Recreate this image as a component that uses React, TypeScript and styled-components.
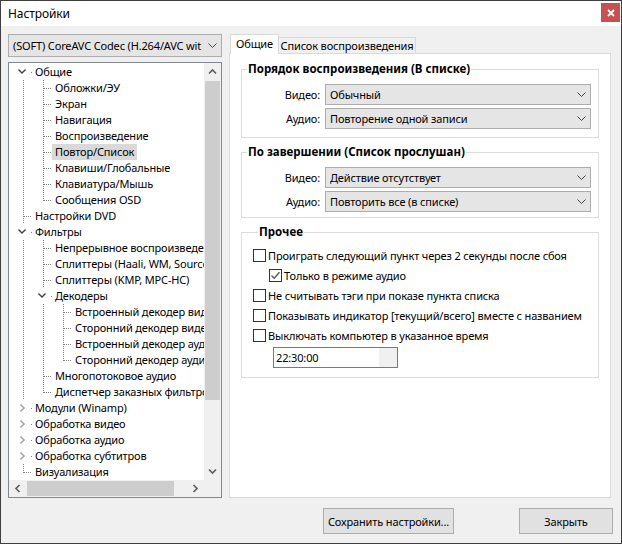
import React from "react";
import styled, { createGlobalStyle } from "styled-components";

const GlobalStyle = createGlobalStyle`
  html, body { margin: 0; padding: 0; background: #f0f0f0; }
  body {
    font-family: "Noto Sans", "Liberation Sans", sans-serif;
    font-size: 11px;
    letter-spacing: -0.15px;
    color: #000;
  }
  * { box-sizing: border-box; }
`;

const Window = styled.div`
  width: 622px;
  height: 544px;
  border: 1px solid #3f3f3f;
  display: flex;
  flex-direction: column;
  background: #f0f0f0;
  overflow: hidden;
`;

const TitleBar = styled.div`
  height: 25px;
  flex-shrink: 0;
  background: #fff;
  display: flex;
  align-items: flex-start;
`;

const Title = styled.div`
  flex: 1;
  font-size: 12px;
  line-height: 25px;
  padding-left: 7px;
  letter-spacing: -0.1px;
`;

const CloseButton = styled.div`
  width: 19px;
  height: 19px;
  margin: 2px 1px 0 0;
  background: #c75050;
  display: flex;
  align-items: center;
  justify-content: center;
`;

const Body = styled.div`
  flex: 1;
  display: flex;
  flex-direction: column;
  padding: 8px 8px 0 7px;
`;

const Main = styled.div`
  display: flex;
  gap: 7px;
  height: 464px;
`;

const LeftColumn = styled.div`
  width: 214px;
  display: flex;
  flex-direction: column;
  gap: 5px;
`;

const Combo = styled.div<{ $h: number }>`
  height: ${(p) => p.$h}px;
  border: 1px solid #adadad;
  background: #e5e5e5;
  display: flex;
  align-items: center;
  padding-left: 4px;
  overflow: hidden;
`;

const ComboText = styled.span`
  flex: 1;
  min-width: 0;
  overflow: hidden;
  white-space: nowrap;
`;

const ComboArrowBox = styled.span`
  width: 17px;
  height: 100%;
  flex-shrink: 0;
  display: flex;
  align-items: center;
  justify-content: center;
`;

const TreeBox = styled.div`
  height: 436px;
  border: 1px solid #828790;
  background: #fff;
  display: grid;
  grid-template-columns: 1fr 17px;
  grid-template-rows: 1fr 17px;
`;

const TreeViewport = styled.div`
  overflow: hidden;
  padding-top: 1px;
`;

const TreeRow = styled.div`
  height: 16px;
  display: flex;
  align-items: center;
  white-space: nowrap;
`;

const NodeLabel = styled.span<{ $sel?: boolean }>`
  height: 16px;
  line-height: 16px;
  padding: 0 3px;
  background: ${(p) => (p.$sel ? "#d9d9d9" : "transparent")};
`;

const VScroll = styled.div`
  background: #f0f0f0;
  display: flex;
  flex-direction: column;
`;

const HScroll = styled.div`
  background: #f0f0f0;
  display: flex;
`;

const ScrollBtn = styled.div`
  width: 17px;
  height: 17px;
  flex-shrink: 0;
  display: flex;
  align-items: center;
  justify-content: center;
`;

const VTrack = styled.div`
  flex: 1;
`;

const VThumb = styled.div`
  margin: 1px 1px 0 1px;
  height: 319px;
  background: #cdcdcd;
`;

const HTrack = styled.div`
  flex: 1;
  display: flex;
  align-items: stretch;
`;

const HThumb = styled.div`
  margin: 1px 0 1px 1px;
  width: 147px;
  background: #cdcdcd;
`;

const Corner = styled.div`
  background: #f0f0f0;
`;

const TabControl = styled.div`
  width: 382px;
  display: flex;
  flex-direction: column;
`;

const TabStrip = styled.div`
  height: 19px;
  display: flex;
  align-items: flex-end;
  padding-left: 1px;
  position: relative;
  z-index: 1;
`;

const Tab = styled.div<{ $active?: boolean; $w: number }>`
  width: ${(p) => p.$w}px;
  height: ${(p) => (p.$active ? 20 : 16)}px;
  margin-bottom: ${(p) => (p.$active ? -1 : 0)}px;
  background: ${(p) => (p.$active ? "#fff" : "#f0f0f0")};
  border: 1px solid #d9d9d9;
  border-bottom: none;
  border-left: ${(p) => (p.$active ? "1px solid #d9d9d9" : "none")};
  display: flex;
  align-items: center;
  justify-content: center;
  padding-bottom: ${(p) => (p.$active ? 2 : 0)}px;
  white-space: nowrap;
  overflow: hidden;
`;

const TabPanel = styled.div`
  flex: 1;
  background: #fff;
  border: 1px solid #d9d9d9;
  padding: 7px 11px 0 11px;
  display: flex;
  flex-direction: column;
  gap: 6px;
`;

const Group = styled.fieldset<{ $pt: number; $pb: number; $pl: number }>`
  margin: 0;
  min-width: 0;
  border: 1px solid #dcdcdc;
  padding: ${(p) => p.$pt}px 7px ${(p) => p.$pb}px ${(p) => p.$pl}px;
`;

const Legend = styled.legend`
  font-weight: 700;
  font-size: 11.5px;
  letter-spacing: 0;
  line-height: 16px;
  padding: 0 1px;
  margin-left: 5px;
`;

const FieldRows = styled.div`
  display: flex;
  flex-direction: column;
  gap: 3px;
`;

const FieldRow = styled.div`
  display: grid;
  grid-template-columns: 78px 1fr;
  column-gap: 5px;
  align-items: center;
`;

const FieldLabel = styled.span`
  text-align: right;
  white-space: nowrap;
`;

const CheckRow = styled.div<{ $indent?: number }>`
  height: 20px;
  display: flex;
  align-items: center;
  gap: 2px;
  padding-left: ${(p) => p.$indent || 0}px;
  white-space: nowrap;
`;

const CheckBox = styled.span`
  width: 13px;
  height: 13px;
  flex-shrink: 0;
  border: 1px solid #333;
  background: #fff;
  display: flex;
  align-items: center;
  justify-content: center;
`;

const TimeField = styled.div`
  margin: 2px 0 0 20px;
  width: 125px;
  height: 21px;
  border: 1px solid #7a7a7a;
  background: #fff;
  display: flex;
  align-items: stretch;
`;

const TimeText = styled.span`
  flex: 1;
  padding-left: 2px;
  display: flex;
  align-items: center;
`;

const SpinStub = styled.span`
  width: 18px;
  background: #f0f0f0;
`;

const ButtonRow = styled.div`
  margin-top: 10px;
  display: flex;
  justify-content: flex-end;
  gap: 65px;
`;

const Button = styled.div<{ $w: number }>`
  width: ${(p) => p.$w}px;
  height: 26px;
  border: 1px solid #adadad;
  background: #e1e1e1;
  display: flex;
  align-items: center;
  justify-content: center;
  white-space: nowrap;
`;

/* ---------- drawings ---------- */

const ChevronDown = () => (
  <svg width="9" height="5" viewBox="0 0 9 5">
    <polyline points="0.5,0.5 4.5,4.5 8.5,0.5" fill="none" stroke="#444" strokeWidth="1" />
  </svg>
);

const ComboArrow = () => (
  <ComboArrowBox>
    <ChevronDown />
  </ComboArrowBox>
);

const ArrowIcon = ({ dir }: { dir: "up" | "down" | "left" | "right" }) => {
  const pts: Record<string, string> = {
    up: "5,10.5 8.5,7 12,10.5",
    down: "5,6.5 8.5,10 12,6.5",
    left: "10.5,5 7,8.5 10.5,12",
    right: "6.5,5 10,8.5 6.5,12",
  };
  return (
    <svg width="17" height="17" viewBox="0 0 17 17">
      <polyline points={pts[dir]} fill="none" stroke="#606060" strokeWidth="1.7" />
    </svg>
  );
};

const DOT = { stroke: "#808080", strokeWidth: 1, strokeDasharray: "1 1", shapeRendering: "crispEdges" as const };

const Guide = ({ cont }: { cont: boolean }) => (
  <svg width="20" height="16" style={{ flexShrink: 0 }}>
    {cont && <line x1="14.5" y1="0" x2="14.5" y2="16" {...DOT} />}
  </svg>
);

type Flat = {
  t: string;
  anc: boolean[];
  last: boolean;
  first: boolean;
  exp?: "open" | "closed";
  sel?: boolean;
};

const Connector = ({ r }: { r: Flat }) => (
  <svg width="23" height="16" style={{ flexShrink: 0 }}>
    {r.exp ? (
      <>
        <line x1="22" y1="8.5" x2="23" y2="8.5" {...DOT} />
        {r.exp === "open" ? (
          <polyline points="9.5,5.5 13,9 16.5,5.5" fill="none" stroke="#404040" strokeWidth="1.4" />
        ) : (
          <polyline points="11.5,4.5 15,8 11.5,11.5" fill="none" stroke="#a6a6a6" strokeWidth="1.6" />
        )}
      </>
    ) : (
      <>
        <line x1="14.5" y1={r.first ? 8 : 0} x2="14.5" y2={r.last ? 9 : 16} {...DOT} />
        <line x1="15" y1="8.5" x2="23" y2="8.5" {...DOT} />
      </>
    )}
  </svg>
);

/* ---------- data ---------- */

type Node = { t: string; c?: Node[]; open?: boolean; sel?: boolean };

const treeData: Node[] = [
  {
    t: "Общие",
    open: true,
    c: [
      { t: "Обложки/ЭУ" },
      { t: "Экран" },
      { t: "Навигация" },
      { t: "Воспроизведение" },
      { t: "Повтор/Список", sel: true },
      { t: "Клавиши/Глобальные" },
      { t: "Клавиатура/Мышь" },
      { t: "Сообщения OSD" },
    ],
  },
  { t: "Настройки DVD" },
  {
    t: "Фильтры",
    open: true,
    c: [
      { t: "Непрерывное воспроизведение" },
      { t: "Сплиттеры (Haali, WM, Source)" },
      { t: "Сплиттеры (KMP, MPC-HC)" },
      {
        t: "Декодеры",
        open: true,
        c: [
          { t: "Встроенный декодер видео" },
          { t: "Сторонний декодер видео" },
          { t: "Встроенный декодер аудио" },
          { t: "Сторонний декодер аудио" },
        ],
      },
      { t: "Многопотоковое аудио" },
      { t: "Диспетчер заказных фильтров" },
    ],
  },
  { t: "Модули (Winamp)", c: [] },
  { t: "Обработка видео", c: [] },
  { t: "Обработка аудио", c: [] },
  { t: "Обработка субтитров", c: [] },
  { t: "Визуализация" },
];

function flatten(nodes: Node[], level: number, anc: boolean[], out: Flat[]) {
  nodes.forEach((n, i) => {
    const last = i === nodes.length - 1;
    out.push({
      t: n.t,
      anc,
      last,
      first: level === 0 && i === 0,
      exp: n.c ? (n.open ? "open" : "closed") : undefined,
      sel: n.sel,
    });
    if (n.c && n.open) flatten(n.c, level + 1, [...anc, !last], out);
  });
  return out;
}

const rows = flatten(treeData, 0, [], []);

const checks = [
  { t: "Проиграть следующий пункт через 2 секунды после сбоя", indent: 0 },
  { t: "Только в режиме аудио", indent: 16, checked: true },
  { t: "Не считывать тэги при показе пункта списка", indent: 0 },
  { t: "Показывать индикатор [текущий/всего] вместе с названием", indent: 0 },
  { t: "Выключать компьютер в указанное время", indent: 0 },
];

export default function App() {
  return (
    <>
      <GlobalStyle />
      <Window>
        <TitleBar>
          <Title>Настройки</Title>
          <CloseButton>
            <svg width="8" height="8" viewBox="0 0 8 8">
              <path d="M1 1 L7 7 M7 1 L1 7" stroke="#fff" strokeWidth="1.8" />
            </svg>
          </CloseButton>
        </TitleBar>
        <Body>
          <Main>
            <LeftColumn>
              <Combo $h={23}>
                <ComboText>(SOFT) CoreAVC Codec (H.264/AVC wit</ComboText>
                <ComboArrow />
              </Combo>
              <TreeBox>
                <TreeViewport>
                  {rows.map((r, i) => (
                    <TreeRow key={i}>
                      {r.anc.map((c, j) => (
                        <Guide key={j} cont={c} />
                      ))}
                      <Connector r={r} />
                      <NodeLabel $sel={r.sel}>{r.t}</NodeLabel>
                    </TreeRow>
                  ))}
                </TreeViewport>
                <VScroll>
                  <ScrollBtn>
                    <ArrowIcon dir="up" />
                  </ScrollBtn>
                  <VTrack>
                    <VThumb />
                  </VTrack>
                  <ScrollBtn>
                    <ArrowIcon dir="down" />
                  </ScrollBtn>
                </VScroll>
                <HScroll>
                  <ScrollBtn>
                    <ArrowIcon dir="left" />
                  </ScrollBtn>
                  <HTrack>
                    <HThumb />
                  </HTrack>
                  <ScrollBtn>
                    <ArrowIcon dir="right" />
                  </ScrollBtn>
                </HScroll>
                <Corner />
              </TreeBox>
            </LeftColumn>
            <TabControl>
              <TabStrip>
                <Tab $active $w={49}>Общие</Tab>
                <Tab $w={137}>Список воспроизведения</Tab>
              </TabStrip>
              <TabPanel>
                <Group $pt={7} $pb={8} $pl={0}>
                  <Legend>Порядок воспроизведения (В списке)</Legend>
                  <FieldRows>
                    <FieldRow>
                      <FieldLabel>Видео:</FieldLabel>
                      <Combo $h={21}>
                        <ComboText>Обычный</ComboText>
                        <ComboArrow />
                      </Combo>
                    </FieldRow>
                    <FieldRow>
                      <FieldLabel>Аудио:</FieldLabel>
                      <Combo $h={21}>
                        <ComboText>Повторение одной записи</ComboText>
                        <ComboArrow />
                      </Combo>
                    </FieldRow>
                  </FieldRows>
                </Group>
                <Group $pt={7} $pb={5} $pl={0}>
                  <Legend>По завершении (Список прослушан)</Legend>
                  <FieldRows>
                    <FieldRow>
                      <FieldLabel>Видео:</FieldLabel>
                      <Combo $h={21}>
                        <ComboText>Действие отсутствует</ComboText>
                        <ComboArrow />
                      </Combo>
                    </FieldRow>
                    <FieldRow>
                      <FieldLabel>Аудио:</FieldLabel>
                      <Combo $h={21}>
                        <ComboText>Повторить все (в списке)</ComboText>
                        <ComboArrow />
                      </Combo>
                    </FieldRow>
                  </FieldRows>
                </Group>
                <Group $pt={5} $pb={9} $pl={11}>
                  <Legend>Прочее</Legend>
                  {checks.map((c) => (
                    <CheckRow key={c.t} $indent={c.indent}>
                      <CheckBox>
                        {c.checked && (
                          <svg width="11" height="11" viewBox="0 0 11 11">
                            <polyline points="1.5,5.5 4.2,8.2 9.5,2.2" fill="none" stroke="#555" strokeWidth="1.3" />
                          </svg>
                        )}
                      </CheckBox>
                      <span>{c.t}</span>
                    </CheckRow>
                  ))}
                  <TimeField>
                    <TimeText>22:30:00</TimeText>
                    <SpinStub />
                  </TimeField>
                </Group>
              </TabPanel>
            </TabControl>
          </Main>
          <ButtonRow>
            <Button $w={131}>Сохранить настройки...</Button>
            <Button $w={94}>Закрыть</Button>
          </ButtonRow>
        </Body>
      </Window>
    </>
  );
}
